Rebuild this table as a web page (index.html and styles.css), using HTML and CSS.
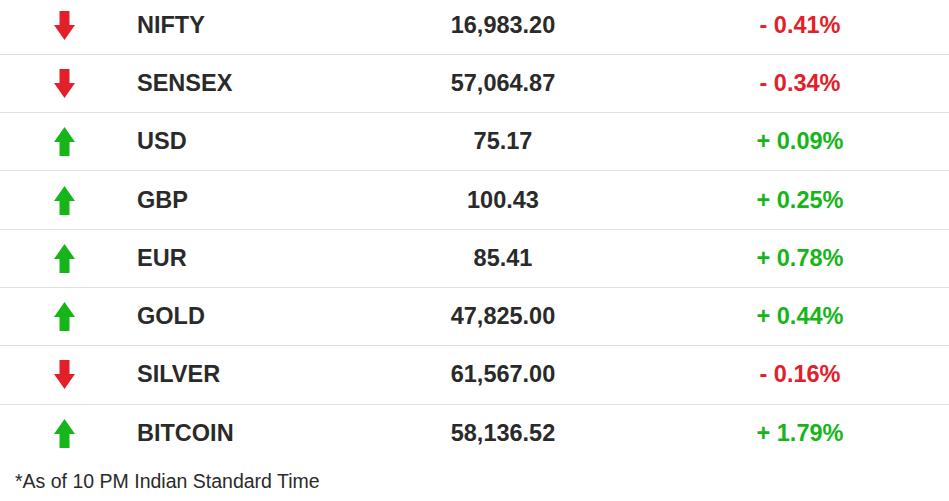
FILE: index.html
```html
<!DOCTYPE html>
<html>
<head>
<meta charset="utf-8">
<link rel="stylesheet" href="styles.css">
</head>
<body>
<div class="table">
  <div class="row">
    <div class="icon"><svg class="arrow down" viewBox="0 0 21 29"><polygon points="5.5,0 15.5,0 15.5,14 21,14 10.5,29 0,14 5.5,14"/></svg></div>
    <div class="name">NIFTY</div><div class="value">16,983.20</div><div class="change neg">- 0.41%</div>
  </div>
  <div class="row">
    <div class="icon"><svg class="arrow down" viewBox="0 0 21 29"><polygon points="5.5,0 15.5,0 15.5,14 21,14 10.5,29 0,14 5.5,14"/></svg></div>
    <div class="name">SENSEX</div><div class="value">57,064.87</div><div class="change neg">- 0.34%</div>
  </div>
  <div class="row">
    <div class="icon"><svg class="arrow up" viewBox="0 0 21 29"><polygon points="10.5,0 21,15 15.5,15 15.5,29 5.5,29 5.5,15 0,15"/></svg></div>
    <div class="name">USD</div><div class="value">75.17</div><div class="change pos">+ 0.09%</div>
  </div>
  <div class="row">
    <div class="icon"><svg class="arrow up" viewBox="0 0 21 29"><polygon points="10.5,0 21,15 15.5,15 15.5,29 5.5,29 5.5,15 0,15"/></svg></div>
    <div class="name">GBP</div><div class="value">100.43</div><div class="change pos">+ 0.25%</div>
  </div>
  <div class="row">
    <div class="icon"><svg class="arrow up" viewBox="0 0 21 29"><polygon points="10.5,0 21,15 15.5,15 15.5,29 5.5,29 5.5,15 0,15"/></svg></div>
    <div class="name">EUR</div><div class="value">85.41</div><div class="change pos">+ 0.78%</div>
  </div>
  <div class="row">
    <div class="icon"><svg class="arrow up" viewBox="0 0 21 29"><polygon points="10.5,0 21,15 15.5,15 15.5,29 5.5,29 5.5,15 0,15"/></svg></div>
    <div class="name">GOLD</div><div class="value">47,825.00</div><div class="change pos">+ 0.44%</div>
  </div>
  <div class="row">
    <div class="icon"><svg class="arrow down" viewBox="0 0 21 29"><polygon points="5.5,0 15.5,0 15.5,14 21,14 10.5,29 0,14 5.5,14"/></svg></div>
    <div class="name">SILVER</div><div class="value">61,567.00</div><div class="change neg">- 0.16%</div>
  </div>
  <div class="row last">
    <div class="icon"><svg class="arrow up" viewBox="0 0 21 29"><polygon points="10.5,0 21,15 15.5,15 15.5,29 5.5,29 5.5,15 0,15"/></svg></div>
    <div class="name">BITCOIN</div><div class="value">58,136.52</div><div class="change pos">+ 1.79%</div>
  </div>
</div>
<p class="note">*As of 10 PM Indian Standard Time</p>
</body>
</html>
```
FILE: styles.css
```css
html, body {
  margin: 0;
  padding: 0;
  background: #fff;
}
body {
  font-family: "Liberation Sans", Arial, sans-serif;
  color: #2a2a2a;
  overflow: hidden;
}
.table {
  margin-top: -3.5px;
}
.row {
  display: grid;
  grid-template-columns: 128px 248px 254px 1fr;
  align-items: center;
  height: 57.3px;
  border-bottom: 1px solid #e0e0e0;
  font-weight: bold;
  font-size: 23.5px;
}
.row.last {
  border-bottom: none;
}
.icon {
  display: flex;
  justify-content: center;
  align-items: center;
}
.arrow {
  width: 21px;
  height: 29px;
  display: block;
}
.arrow.down { fill: #e3202a; }
.arrow.up { fill: #16b51a; }
.name {
  padding-left: 9px;
}
.value {
  text-align: center;
}
.change {
  text-align: center;
  padding-left: 21px;
}
.neg { color: #e3202a; }
.pos { color: #16b51a; }
.note {
  margin: 8.5px 0 0 15px;
  font-size: 19.5px;
  color: #2a2a2a;
}
```
